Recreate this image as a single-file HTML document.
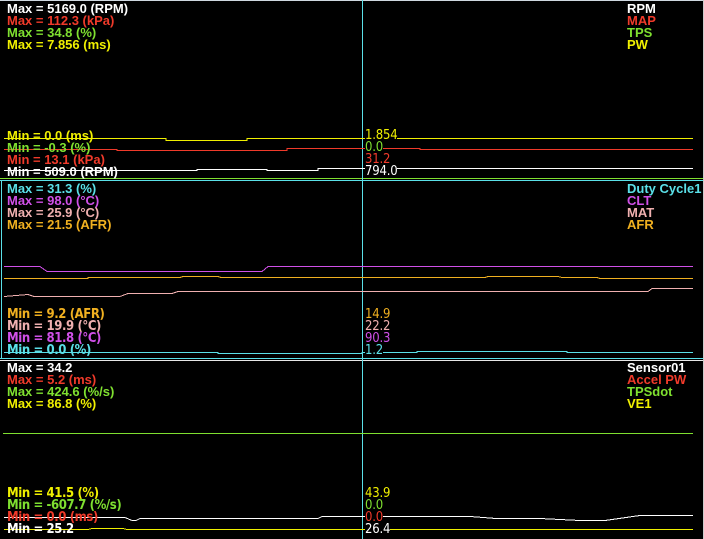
<!DOCTYPE html>
<html><head><meta charset="utf-8"><style>
html,body{margin:0;padding:0;background:#000;width:704px;height:539px;overflow:hidden;position:relative}
.t{position:absolute;font:bold 13px/12px "Liberation Sans",sans-serif;white-space:pre}
.c{position:absolute;font:bold 13px/12px "DejaVu Sans Condensed","DejaVu Sans",sans-serif;white-space:pre;letter-spacing:-0.4px}
.v{position:absolute;font:13px/12px "DejaVu Sans Condensed","DejaVu Sans",sans-serif;white-space:pre;left:365px;letter-spacing:-0.2px}
svg{position:absolute;left:0;top:0}
</style></head><body>
<svg width="704" height="539" viewBox="0 0 704 539" shape-rendering="crispEdges">
<line x1="0" y1="0.5" x2="704" y2="0.5" stroke="#cfd8e0"/>
<line x1="0" y1="178.5" x2="704" y2="178.5" stroke="#7fe030"/>
<line x1="0" y1="180.5" x2="704" y2="180.5" stroke="#5ae0e8"/>
<line x1="1.5" y1="180" x2="1.5" y2="358" stroke="#5ae0e8"/>
<line x1="0" y1="358.5" x2="704" y2="358.5" stroke="#5ae0e8"/>
<line x1="0" y1="360.5" x2="704" y2="360.5" stroke="#e8e8e8"/>
<line x1="703.5" y1="0" x2="703.5" y2="539" stroke="#ccc"/>
<line x1="362.5" y1="0" x2="362.5" y2="539" stroke="#5ae0e8"/>
<polyline fill="none" stroke="#f0f000" points="4,138.5 166,138.5 166,140.5 247,140.5 247,138.5 693,138.5"/>
<polyline fill="none" stroke="#f03a2a" points="4,149.5 117,149.5 117,150.5 287,150.5 287,148.5 420,148.5 420,149.5 693,149.5"/>
<polyline fill="none" stroke="#fff" points="4,170.5 197,170.5 197,169.5 267,169.5 267,170.5 318,170.5 318,168.5 693,168.5"/>
<polyline fill="none" stroke="#d050e8" points="4,266.5 40,266.5 47,271.5 262,271.5 268,266.5 693,266.5"/>
<polyline fill="none" stroke="#f0b020" points="4,278.5 88,278.5 88,277.5 180,277.5 183,276.5 218,276.5 221,277.5 485,277.5 488,276.5 558,276.5 562,277.5 597,277.5 600,278.5 693,278.5"/>
<polyline fill="none" stroke="#f0b0b0" points="4,296.5 28,294.5 34,296.5 120,296.5 128,293.5 172,293.5 178,291.5 648,291.5 652,288.5 693,288.5"/>
<polyline fill="none" stroke="#5ae0e8" points="4,352.5 218,352.5 218,353.5 362,353.5 362,352.5 417,352.5 417,351.5 567,351.5 567,352.5 693,352.5"/>
<line x1="3" y1="433.5" x2="693" y2="433.5" stroke="#7fe030"/>
<polyline fill="none" stroke="#fff" points="4,517.5 125,517.5 132,520.5 136,520.5 140,518.5 318,518.5 322,516.5 470,516.5 496,518.5 540,518.5 580,520.5 605,520.5 640,515.5 693,515.5"/>
<polyline fill="none" stroke="#f0f000" points="4,529.5 88,529.5 92,528.5 123,528.5 127,529.5 693,529.5"/>
</svg>
<div class="t" style="left:7px;top:3px;color:#fff">Max = 5169.0 (RPM)</div>
<div class="t" style="left:7px;top:15px;color:#f03a2a">Max = 112.3 (kPa)</div>
<div class="t" style="left:7px;top:27px;color:#7fe030">Max = 34.8 (%)</div>
<div class="t" style="left:7px;top:39px;color:#f0f000">Max = 7.856 (ms)</div>
<div class="t" style="left:627px;top:3px;color:#fff">RPM</div>
<div class="t" style="left:627px;top:15px;color:#f03a2a">MAP</div>
<div class="t" style="left:627px;top:27px;color:#7fe030">TPS</div>
<div class="t" style="left:627px;top:39px;color:#f0f000">PW</div>
<div class="t" style="left:7px;top:130px;color:#f0f000">Min = 0.0 (ms)</div>
<div class="t" style="left:7px;top:142px;color:#7fe030">Min = -0.3 (%)</div>
<div class="t" style="left:7px;top:154px;color:#f03a2a">Min = 13.1 (kPa)</div>
<div class="t" style="left:7px;top:166px;color:#fff">Min = 509.0 (RPM)</div>
<div class="v" style="top:130px;color:#f0f000;background:#000">1.854</div>
<div class="v" style="top:142px;color:#7fe030;background:#000">0.0</div>
<div class="v" style="top:154px;color:#f03a2a">31.2</div>
<div class="v" style="top:166px;color:#fff;background:#000">794.0</div>
<div class="t" style="left:7px;top:183px;color:#5ae0e8">Max = 31.3 (%)</div>
<div class="t" style="left:7px;top:195px;color:#d050e8">Max = 98.0 (°C)</div>
<div class="t" style="left:7px;top:207px;color:#f0b0b0">Max = 25.9 (°C)</div>
<div class="t" style="left:7px;top:219px;color:#f0b020">Max = 21.5 (AFR)</div>
<div class="t" style="left:627px;top:183px;color:#5ae0e8">Duty Cycle1</div>
<div class="t" style="left:627px;top:195px;color:#d050e8">CLT</div>
<div class="t" style="left:627px;top:207px;color:#f0b0b0">MAT</div>
<div class="t" style="left:627px;top:219px;color:#f0b020">AFR</div>
<div class="c" style="left:7px;top:309px;color:#f0b020">Min = 9.2 (AFR)</div>
<div class="c" style="left:7px;top:321px;color:#f0b0b0">Min = 19.9 (°C)</div>
<div class="c" style="left:7px;top:333px;color:#d050e8">Min = 81.8 (°C)</div>
<div class="c" style="left:7px;top:345px;color:#5ae0e8">Min = 0.0 (%)</div>
<div class="v" style="top:309px;color:#f0b020">14.9</div>
<div class="v" style="top:321px;color:#f0b0b0">22.2</div>
<div class="v" style="top:333px;color:#d050e8">90.3</div>
<div class="v" style="top:345px;color:#5ae0e8;background:#000">1.2</div>
<div class="t" style="left:7px;top:362px;color:#fff">Max = 34.2</div>
<div class="t" style="left:7px;top:374px;color:#f03a2a">Max = 5.2 (ms)</div>
<div class="t" style="left:7px;top:386px;color:#7fe030">Max = 424.6 (%/s)</div>
<div class="t" style="left:7px;top:398px;color:#f0f000">Max = 86.8 (%)</div>
<div class="t" style="left:627px;top:362px;color:#fff">Sensor01</div>
<div class="t" style="left:627px;top:374px;color:#f03a2a">Accel PW</div>
<div class="t" style="left:627px;top:386px;color:#7fe030">TPSdot</div>
<div class="t" style="left:627px;top:398px;color:#f0f000">VE1</div>
<div class="c" style="left:7px;top:488px;color:#f0f000">Min = 41.5 (%)</div>
<div class="c" style="left:7px;top:500px;color:#7fe030">Min = -607.7 (%/s)</div>
<div class="c" style="left:7px;top:512px;color:#f03a2a">Min = 0.0 (ms)</div>
<div class="c" style="left:7px;top:524px;color:#fff">Min = 25.2</div>
<div class="v" style="top:488px;color:#f0f000">43.9</div>
<div class="v" style="top:500px;color:#7fe030">0.0</div>
<div class="v" style="top:512px;color:#f03a2a;background:#000">0.0</div>
<div class="v" style="top:524px;color:#fff;background:#000">26.4</div>
</body></html>
